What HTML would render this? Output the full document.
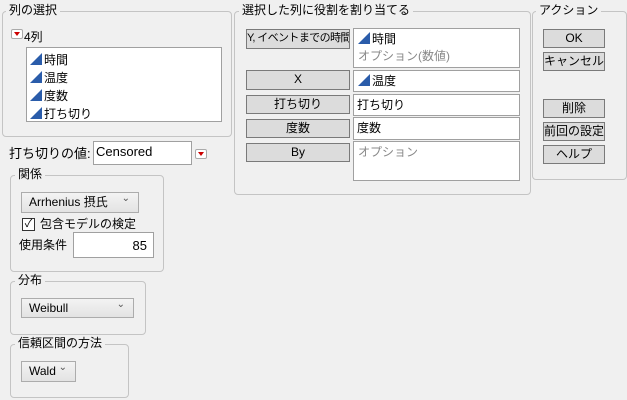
<!DOCTYPE html><html><head><meta charset="utf-8"><style>
body{margin:0;width:627px;height:400px;background:#f0f0f0;font-family:"Liberation Sans","Noto Sans CJK JP",sans-serif;font-size:12px;color:#000;position:relative;overflow:hidden}
.a{position:absolute;white-space:nowrap}
.p{position:absolute;border:1px solid #c4c4c4;border-radius:4px}
.lg{position:absolute;background:#f0f0f0;padding:0 3px;line-height:14px}
.b{position:absolute;background:#dcdcdc;border:1px solid #7a7a7a;text-align:center;box-sizing:border-box;line-height:16px;white-space:nowrap;overflow:hidden}
.w{position:absolute;background:#fff;border:1px solid #a0a0a0;box-sizing:border-box;white-space:nowrap}
.dd{position:absolute;background:linear-gradient(#f3f3f3,#e3e3e3);border:1px solid #acacac;box-sizing:border-box;line-height:18px;padding-left:7px;white-space:nowrap}
.dd:after{content:"⌄";position:absolute;right:8px;top:-3px;font-size:10px;color:#555}
.tri{display:inline-block;width:0;height:0;border-left:12px solid transparent;border-bottom:12px solid #2a5caa;vertical-align:-1px;margin-right:2px}
.rd{position:absolute;width:12px;height:10px;border:1px solid #aaa;border-radius:2px;background:#fff;box-sizing:border-box}
.rd:after{content:"";position:absolute;left:2px;top:2px;border-left:3px solid transparent;border-right:3px solid transparent;border-top:4px solid #c00}
.g{color:#888}
</style></head><body>
<div class="p" style="left:2px;top:11px;width:228px;height:124px"></div>
<div class="lg a" style="left:6px;top:3px">列の選択</div>
<div class="rd" style="left:11px;top:29px"></div>
<div class="a" style="left:24px;top:28px">4列</div>
<div class="w" style="left:26px;top:47px;width:196px;height:75px"></div>
<div class="a" style="left:30px;top:51px;line-height:18px"><span class="tri"></span>時間<br><span class="tri"></span>温度<br><span class="tri"></span>度数<br><span class="tri"></span>打ち切り</div>
<div class="a" style="left:9px;top:143px;font-size:13px">打ち切りの値:</div>
<div class="w" style="left:93px;top:141px;width:99px;height:24px;padding:2px 2px;font-size:13px">Censored</div>
<div class="rd" style="left:195px;top:149px"></div>

<div class="p" style="left:234px;top:11px;width:295px;height:182px"></div>
<div class="lg a" style="left:239px;top:3px">選択した列に役割を割り当てる</div>
<div class="b" style="left:246px;top:29px;width:104px;height:20px;font-size:11px;letter-spacing:-0.6px;padding:0">Y, イベントまでの時間</div>
<div class="b" style="left:246px;top:70px;width:104px;height:20px">X</div>
<div class="b" style="left:246px;top:95px;width:104px;height:19px">打ち切り</div>
<div class="b" style="left:246px;top:119px;width:104px;height:19px">度数</div>
<div class="b" style="left:246px;top:143px;width:104px;height:19px">By</div>
<div class="w" style="left:353px;top:28px;width:167px;height:40px;padding:2px 4px;line-height:17px"><span class="tri"></span>時間<br><span class="g">オプション(数値)</span></div>
<div class="w" style="left:353px;top:70px;width:167px;height:22px;padding:2px 4px;line-height:16px"><span class="tri"></span>温度</div>
<div class="w" style="left:353px;top:94px;width:167px;height:22px;padding:2px 3px;line-height:16px">打ち切り</div>
<div class="w" style="left:353px;top:117px;width:167px;height:23px;padding:2px 3px;line-height:16px">度数</div>
<div class="w" style="left:353px;top:141px;width:167px;height:40px;padding:2px 4px;line-height:16px"><span class="g">オプション</span></div>

<div class="p" style="left:532px;top:11px;width:93px;height:167px"></div>
<div class="lg a" style="left:536px;top:3px">アクション</div>
<div class="b" style="left:543px;top:29px;width:62px;height:19px">OK</div>
<div class="b" style="left:543px;top:52px;width:62px;height:19px">キャンセル</div>
<div class="b" style="left:543px;top:99px;width:62px;height:19px">削除</div>
<div class="b" style="left:543px;top:122px;width:62px;height:19px">前回の設定</div>
<div class="b" style="left:543px;top:145px;width:62px;height:19px">ヘルプ</div>

<div class="p" style="left:10px;top:175px;width:152px;height:95px"></div>
<div class="lg a" style="left:15px;top:167px">関係</div>
<div class="dd" style="left:21px;top:192px;width:118px;height:21px">Arrhenius 摂氏</div>
<div class="a" style="left:22px;top:218px;width:11px;height:11px;border:1px solid #333;background:#fff;font-size:11px;line-height:11px;text-align:center">✓</div>
<div class="a" style="left:40px;top:216px;line-height:16px">包含モデルの検定</div>
<div class="a" style="left:19px;top:236px">使用条件</div>
<div class="w" style="left:73px;top:232px;width:81px;height:26px;text-align:right;padding:5px 6px;font-size:13px">85</div>

<div class="p" style="left:10px;top:281px;width:134px;height:52px"></div>
<div class="lg a" style="left:15px;top:273px">分布</div>
<div class="dd" style="left:21px;top:298px;width:113px;height:20px">Weibull</div>

<div class="p" style="left:10px;top:344px;width:117px;height:52px"></div>
<div class="lg a" style="left:15px;top:336px">信頼区間の方法</div>
<div class="dd" style="left:21px;top:361px;width:55px;height:21px">Wald</div>
</body></html>
